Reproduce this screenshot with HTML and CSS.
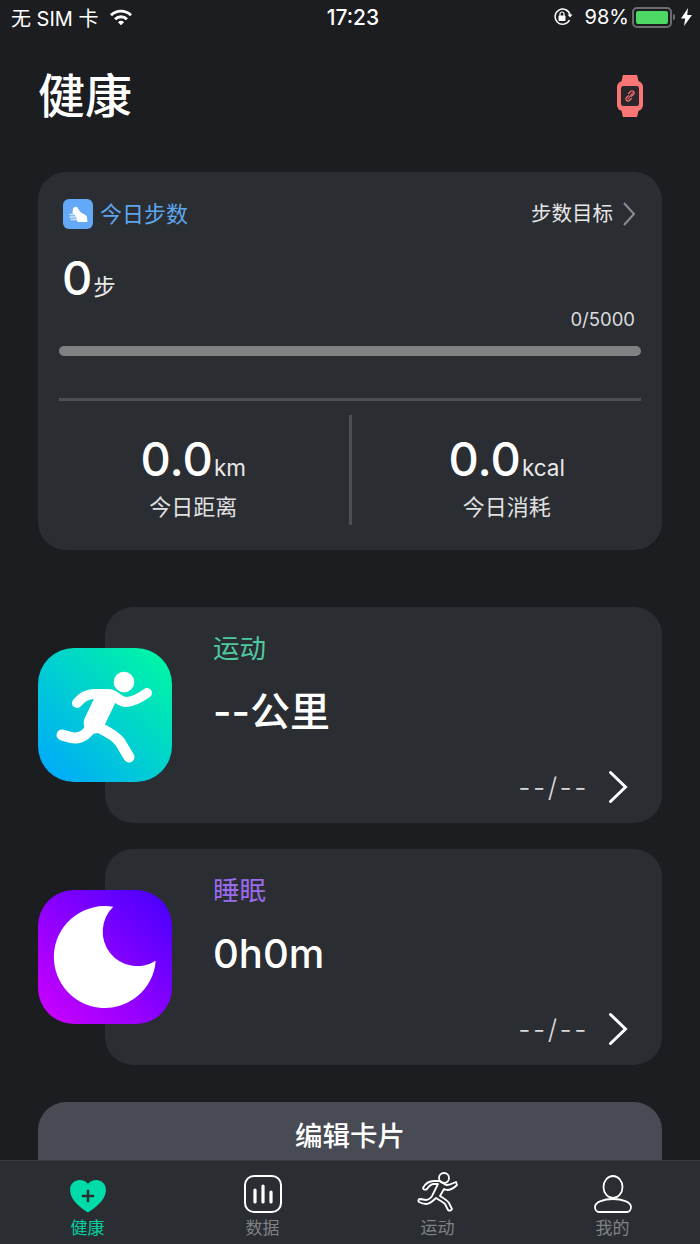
FILE: index.html
```html
<!DOCTYPE html>
<html lang="zh">
<head>
	<meta charset="utf-8">
	<title>健康</title>
	<link rel="stylesheet" href="styles.css">
</head>
<body>
<div class="page">
	<div class="status">
		<div class="status-left">
			<span>无 SIM 卡</span>
			<svg class="wifi" width="24" height="18" viewBox="0 0 24 18">
				<path d="M1 6.200a15.600 15.600 0 0 1 22 0l-2 2.100a12.700 12.700 0 0 0-18 0z" fill="#fff"/>
				<path d="M5 10.200a10 10 0 0 1 14 0l-2.100 2.100a7 7 0 0 0-9.800 0z" fill="#fff"/>
				<path d="M9 14.200a4.300 4.300 0 0 1 6 0l-3 3z" fill="#fff"/>
			</svg>
		</div>
		<div class="status-time">17:23</div>
		<div class="status-right">
			<svg width="20" height="18" viewBox="0 0 20 18">
				<path d="M16.500 12a7.600 7.600 0 1 1 .6-5" fill="none" stroke="#fff" stroke-width="1.500"/>
				<path d="M14.500 6.500h5l-2.500 3z" fill="#fff"/>
				<rect x="5.500" y="7.500" width="7" height="5.500" rx="1" fill="#fff"/>
				<path d="M7 8V6a2 2 0 0 1 4 0v2" fill="none" stroke="#fff" stroke-width="1.200"/>
			</svg>
			<span class="pct">98%</span>
			<div class="battery"><div class="battery-fill"></div></div>
			<div class="battery-tip"></div>
			<svg class="bolt" width="11" height="18" viewBox="0 0 11 18">
				<path d="M7 0 0 10.500h4.200L3 18l8-11H6.200z" fill="#fff"/>
			</svg>
		</div>
	</div>

	<div class="content">
		<div class="top">
			<h1 class="title">健康</h1>
			<svg width="26" height="42" viewBox="0 0 26 42">
				<path d="M6 0h14l2 8H4zM4 34h18l-2 8H6z" fill="#fb7575"/>
				<rect x="0" y="6" width="26" height="30" rx="6" fill="#fb7575"/>
				<rect x="4" y="11" width="18" height="20" rx="2.500" fill="#2b2629"/>
				<path d="M11.500 18.500l2-2a2 2 0 0 1 3 3l-2 1.800M14.500 23.500l-2 2a2 2 0 0 1-3-3l2-1.800M11 24l4.500-6" fill="none" stroke="#fb7575" stroke-width="1.100" stroke-linecap="round"/>
			</svg>
		</div>

		<div class="steps-card">
			<div class="steps-head">
				<div class="steps-name">
					<div class="shoe">
						<svg width="20" height="17" viewBox="0 0 20 17">
							<path d="M5 2.500C6 .500 8.500 0 9.500 1.500L12 5.500c1.500 2 5 2.500 6.500 4.500.6 1 .8 2.500.8 4.500v1.500H9.500L8 10.500 4.500 7z" fill="#fff"/>
							<path d="M1.500 8.500h5M1.500 11h6.500M2.500 13.500h6.500" stroke="#d6e7fb" stroke-width="1.500"/>
						</svg>
					</div>
					<span>今日步数</span>
				</div>
				<div class="steps-goal">
					<span>步数目标</span>
					<svg width="14" height="26" viewBox="0 0 14 26">
						<path d="M2 2l10 11L2 24" fill="none" stroke="#8b8d90" stroke-width="2"/>
					</svg>
				</div>
			</div>
			<div class="steps-count"><span class="big">0</span><span class="unit">步</span></div>
			<div class="steps-of">0/5000</div>
			<div class="bar"></div>
			<div class="rule"></div>
			<div class="stats">
				<div class="stat">
					<div class="stat-num"><span class="big">0.0</span><span class="unit">km</span></div>
					<div class="stat-label">今日距离</div>
				</div>
				<div class="stat-line"></div>
				<div class="stat">
					<div class="stat-num"><span class="big">0.0</span><span class="unit">kcal</span></div>
					<div class="stat-label">今日消耗</div>
				</div>
			</div>
		</div>

		<div class="row row-sport">
			<svg class="app-icon" width="134" height="134" viewBox="0 0 134 134">
				<defs>
					<linearGradient id="sportbg" x1="1" y1="0" x2="0" y2="1">
						<stop offset="0" stop-color="#00fba0"/>
						<stop offset="1" stop-color="#00a6ff"/>
					</linearGradient>
				</defs>
				<rect width="134" height="134" rx="36" fill="url(#sportbg)"/>
				<circle cx="86" cy="34" r="10.300" fill="#fff"/>
				<g fill="none" stroke="#fff" stroke-linecap="round" stroke-linejoin="round">
					<path d="M39 55c5-6 10-9 17-9h14c8 0 10 8 18 8 7 0 14-4 21-9" stroke-width="10"/>
					<path d="M67 52 56 75" stroke-width="21"/>
					<path d="M54 79c-5 6-9 11-17 11-5 0-9-2-13-3" stroke-width="11"/>
					<path d="M60 79c8 4 17 8 22 15 3 5 6 10 9 15" stroke-width="11"/>
				</g>
			</svg>
			<div class="row-card">
				<div class="row-name name-sport">运动</div>
				<div class="row-value">--公里</div>
				<div class="row-foot">
					<span class="row-date">--/--</span>
					<svg width="20" height="34" viewBox="0 0 20 34">
						<path d="M2.500 2.500 17.500 17l-15 14.500" fill="none" stroke="#fff" stroke-width="3" stroke-linecap="round"/>
					</svg>
				</div>
			</div>
		</div>

		<div class="row row-sleep">
			<svg class="app-icon" width="134" height="134" viewBox="0 0 134 134">
				<defs>
					<linearGradient id="sleepbg" x1="1" y1="0" x2="0" y2="1">
						<stop offset="0" stop-color="#4300ff"/>
						<stop offset="1" stop-color="#d000ff"/>
					</linearGradient>
				</defs>
				<rect width="134" height="134" rx="36" fill="url(#sleepbg)"/>
				<path d="M75.300 16.700A51 51 0 1 0 117.700 70.700 34.500 34.500 0 0 1 75.300 16.700z" fill="#fff"/>
			</svg>
			<div class="row-card">
				<div class="row-name name-sleep">睡眠</div>
				<div class="row-value">0h0m</div>
				<div class="row-foot">
					<span class="row-date">--/--</span>
					<svg width="20" height="34" viewBox="0 0 20 34">
						<path d="M2.500 2.500 17.500 17l-15 14.500" fill="none" stroke="#fff" stroke-width="3" stroke-linecap="round"/>
					</svg>
				</div>
			</div>
		</div>

		<div class="edit">编辑卡片</div>
	</div>

	<div class="tabs">
		<div class="tab tab-on">
			<svg width="38" height="34" viewBox="0 0 40 36">
				<path d="M20 35.500C16 33 1 24 1 11.500 1 5 6 1 11 1c4 0 7 1.500 9 4 2-2.500 5-4 9-4 5 0 10 4 10 10.500C39 24 24 33 20 35.500z" fill="#00dca9"/>
				<path d="M20 11.500v13M13.500 18h13" stroke="#2a2d32" stroke-width="2.600"/>
			</svg>
			<span>健康</span>
		</div>
		<div class="tab">
			<svg width="38" height="38" viewBox="0 0 38 38">
				<rect x="1" y="1" width="36" height="36" rx="9" fill="none" stroke="#fff" stroke-width="2"/>
				<path d="M11 15v12M19 11v16M27 17v10" stroke="#fff" stroke-width="3.200" stroke-linecap="round"/>
			</svg>
			<span>数据</span>
		</div>
		<div class="tab">
			<svg width="42" height="42" viewBox="0 0 42 42">
				<g fill="none" stroke="#fff" stroke-width="1.800" stroke-linejoin="round">
					<circle cx="27" cy="7" r="5"/>
					<path d="M6 17c2-4 6-7 11-7h5c3 0 5 4 8 4 3 0 6-2 9-3l1 3c-3 3-6 5-10 5l-3-1-4 7c3 2 7 4 9 7l3 6c-1 2-3 2-4 1l-3-6c-2-2-6-4-9-6-3 3-6 6-10 6-3 0-5-1-7-2-1-1-1-3 1-3l6 1c3 0 6-3 7-6l5-10h-4c-3 0-5 2-7 5-1 1-4 1-4-1z"/>
				</g>
			</svg>
			<span>运动</span>
		</div>
		<div class="tab">
			<svg width="38" height="38" viewBox="0 0 38 38">
				<ellipse cx="19" cy="12" rx="9.500" ry="11" fill="none" stroke="#fff" stroke-width="1.800"/>
				<path d="M1 32c0-5 9-8 18-8s18 3 18 8c0 3-2 5-4 5H5c-2 0-4-2-4-5z" fill="none" stroke="#fff" stroke-width="1.800"/>
			</svg>
			<span>我的</span>
		</div>
	</div>
</div>
</body>
</html>
```

FILE: styles.css
```css
html, body { margin: 0; padding: 0; background: #1c1d21; }
body { font-family: "Inter", "Noto Sans CJK SC", sans-serif; color: #fff; }

.page { width: 700px; height: 1244px; display: flex; flex-direction: column; overflow: hidden; }

.status { height: 34px; flex: none; display: flex; align-items: center; justify-content: space-between; padding: 0 8px 2px 11px; font-size: 20px; position: relative; }
.status-left { display: flex; align-items: center; gap: 10px; }
.status-time { font-size: 21px; font-weight: 500; position: absolute; left: 6px; right: 0; text-align: center; }
.status-right { display: flex; align-items: center; }
.pct { font-size: 20px; margin: 0 3px 0 12px; }
.battery { border: 2px solid #6c6d70; border-radius: 5px; padding: 2px; width: 32px; height: 13px; }
.battery-fill { width: 100%; height: 100%; background: #4cd964; border-radius: 2px; }
.battery-tip { width: 2px; height: 6px; background: #6c6d70; border-radius: 0 2px 2px 0; margin: 0 6px 0 1px; }

.content { flex: 1; min-height: 0; overflow: hidden; padding: 0 38px; }

.top { height: 136px; display: flex; align-items: center; justify-content: space-between; padding: 2px 19px 18px 0; box-sizing: border-box; }
.title { margin: 0; font-size: 47px; font-weight: 500; line-height: 60px; }

.steps-card { height: 378px; box-sizing: border-box; background: #2a2d32; border-radius: 28px; padding: 27px 21px 0; }
.steps-head { display: flex; align-items: center; justify-content: space-between; padding: 0 5px 0 4px; height: 30px; }
.steps-name { display: flex; align-items: center; gap: 7px; font-size: 22px; line-height: 28px; color: #5ea6ec; }
.shoe { width: 30px; height: 30px; background: #63a9f8; border-radius: 6px; display: flex; align-items: center; justify-content: center; }
.steps-goal { display: flex; align-items: center; gap: 9px; font-size: 20.500px; line-height: 28px; color: #e6e6e6; }
.steps-count { margin-top: 22px; padding-left: 3px; height: 54px; display: flex; align-items: baseline; }
.big { font-size: 47px; font-weight: 500; line-height: 54px; }
.unit { font-size: 22.500px; color: #e8e8e8; margin-left: 1px; }
.steps-of { text-align: right; font-size: 18.500px; color: #dcdcdc; padding-right: 6px; height: 26px; line-height: 26px; margin-top: 1px; }
.bar { height: 10px; background: #808183; border-radius: 5px; margin-top: 14px; }
.rule { height: 3px; background: #4c4e51; margin-top: 42px; }
.stats { display: flex; margin: 14px -21px 0; height: 110px; }
.stat { flex: 1; text-align: center; padding-top: 17px; }
.stat-num { height: 56px; line-height: 54px; }
.stat-label { font-size: 22px; color: #e0e0e0; line-height: 30px; margin-top: 4px; }
.stat-line { width: 3px; background: #4c4e51; flex: none; }

.row { display: flex; align-items: center; height: 216px; margin-top: 26px; }
.row-sport { margin-top: 57px; }
.app-icon { flex: none; position: relative; z-index: 1; }
.row-card { flex: 1; height: 216px; margin-left: -67px; box-sizing: border-box; background: #2a2d32; border-radius: 28px; padding: 23px 34px 0 108px; }
.row-name { font-size: 26.500px; line-height: 36px; }
.name-sport { color: #4ec9a0; }
.name-sleep { color: #9a6bec; }
.row-value { font-size: 40px; font-weight: 500; line-height: 50px; margin-top: 21px; }
.row-foot { display: flex; align-items: center; justify-content: flex-end; gap: 19px; margin-top: 33px; height: 34px; }
.row-date { font-size: 27px; font-weight: 300; color: #d8d8d8; letter-spacing: 2.500px; }

.edit { height: 100px; margin-top: 37px; background: #484b54; border-radius: 28px; text-align: center; font-size: 27.500px; font-weight: 500; line-height: 68px; }

.tabs { height: 84px; flex: none; box-sizing: border-box; display: flex; background: #2a2d32; border-top: 1px solid #38393b; }
.tab { flex: 1; display: flex; flex-direction: column; align-items: center; justify-content: flex-end; gap: 3px; font-size: 17px; color: #808285; padding-bottom: 4px; }
.tab span { line-height: 24px; }
.tab-on { color: #00cfa0; }
```
